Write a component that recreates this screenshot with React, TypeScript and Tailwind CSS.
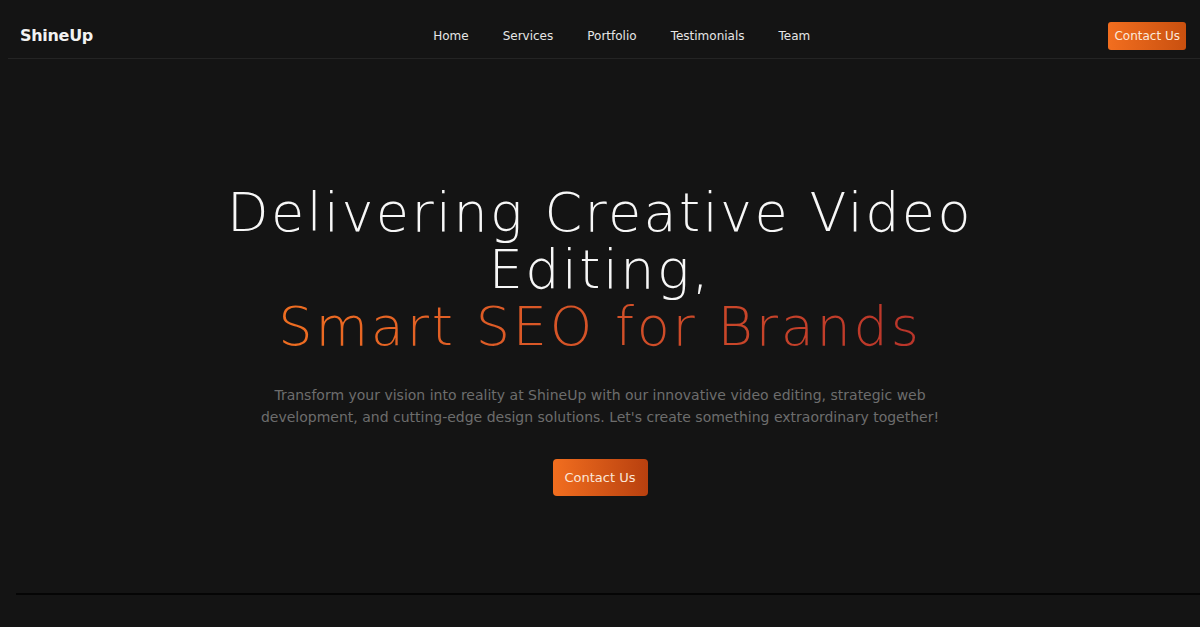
const navLinks = ["Home", "Services", "Portfolio", "Testimonials", "Team"];

export default function App() {
  return (
    <div className="min-h-[627px] bg-[#141414] text-white font-['DejaVu_Sans',sans-serif] overflow-hidden">
      <header className="h-[59px] ml-2 border-b border-[#242424] flex items-center pt-[13px] pl-3 pr-[14px]">
        <a className="text-[16px] font-semibold text-[#f2f2f2] tracking-[-0.3px]">ShineUp</a>
        <nav className="flex-1 flex items-center justify-center gap-[34px] pl-[42px] text-[12px] text-[#e6e6e6]">
          {navLinks.map((l) => (
            <a key={l}>{l}</a>
          ))}
        </nav>
        <button className="h-[28px] px-[6px] rounded-[3px] text-[12px] text-[#fbe9dc] bg-gradient-to-r from-[#f26e1f] to-[#c9500f]">
          Contact Us
        </button>
      </header>

      <section className="flex flex-col items-center text-center pt-[125px]">
        <h1 className="text-[54px] leading-[57px] font-extralight tracking-[2.4px]">
          <span className="block text-[#f7f7f7]">Delivering Creative Video</span>
          <span className="block text-[#f7f7f7]">Editing,</span>
          <span className="block bg-gradient-to-r from-[#f3721f] to-[#b52f2a] bg-clip-text text-transparent tracking-[2.8px]">
            Smart SEO for Brands
          </span>
        </h1>
        <p className="mt-[29px] text-[14px] leading-[22px] text-[#6d6d6d] max-w-[690px]">
          Transform your vision into reality at ShineUp with our innovative video editing, strategic web development, and cutting-edge design solutions. Let's create something extraordinary together!
        </p>
        <button className="mt-[31px] h-[37px] px-[12px] rounded-[4px] text-[13px] text-[#fbe6d8] bg-gradient-to-r from-[#f26e1f] to-[#b8400f]">
          Contact Us
        </button>
      </section>

      <div className="mt-[97px] ml-4 border-t-2 border-[#050505]" />
    </div>
  );
}
